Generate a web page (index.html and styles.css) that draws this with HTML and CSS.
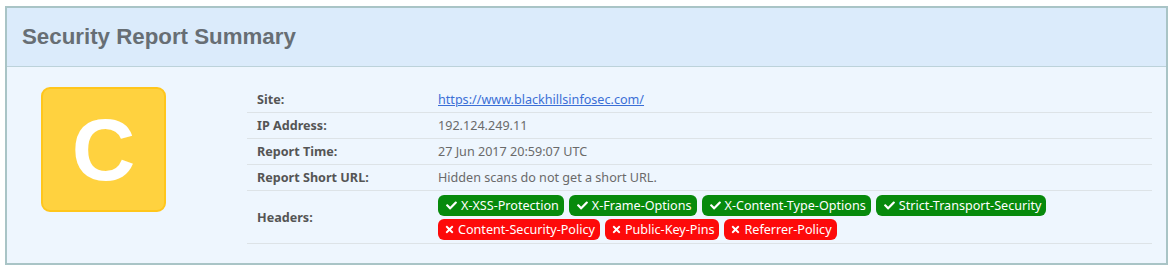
FILE: index.html
```html
<!DOCTYPE html>
<html lang="en">
<head>
    <meta charset="UTF-8">
    <title>Security Report Summary</title>
    <link rel="stylesheet" href="styles.css">
</head>
<body>

<div class="panel">
    <div class="panel-heading">
        <h3>Security Report Summary</h3>
    </div>
    <div class="panel-body">
        <div class="grade"><span>C</span></div>
        <table class="report">
            <tr>
                <th>Site:</th>
                <td><a href="#">https://www.blackhillsinfosec.com/</a></td>
            </tr>
            <tr>
                <th>IP Address:</th>
                <td>192.124.249.11</td>
            </tr>
            <tr>
                <th>Report Time:</th>
                <td>27 Jun 2017 20:59:07 UTC</td>
            </tr>
            <tr>
                <th>Report Short URL:</th>
                <td>Hidden scans do not get a short URL.</td>
            </tr>
            <tr class="headers-row">
                <th>Headers:</th>
                <td>
                    <div class="badges">
                        <div class="badge-line">
                            <span class="badge good"><svg viewBox="0 0 512 512"><path d="M173.9 439.4L7.5 273c-10-10-10-26.2 0-36.2l36.2-36.2c10-10 26.2-10 36.2 0L192 312.7 432.1 72.6c10-10 26.2-10 36.2 0l36.2 36.2c10 10 10 26.2 0 36.2L210.1 439.4c-10 10-26.2 10-36.2 0z"/></svg>X-XSS-Protection</span>
                            <span class="badge good"><svg viewBox="0 0 512 512"><path d="M173.9 439.4L7.5 273c-10-10-10-26.2 0-36.2l36.2-36.2c10-10 26.2-10 36.2 0L192 312.7 432.1 72.6c10-10 26.2-10 36.2 0l36.2 36.2c10 10 10 26.2 0 36.2L210.1 439.4c-10 10-26.2 10-36.2 0z"/></svg>X-Frame-Options</span>
                            <span class="badge good"><svg viewBox="0 0 512 512"><path d="M173.9 439.4L7.5 273c-10-10-10-26.2 0-36.2l36.2-36.2c10-10 26.2-10 36.2 0L192 312.7 432.1 72.6c10-10 26.2-10 36.2 0l36.2 36.2c10 10 10 26.2 0 36.2L210.1 439.4c-10 10-26.2 10-36.2 0z"/></svg>X-Content-Type-Options</span>
                            <span class="badge good"><svg viewBox="0 0 512 512"><path d="M173.9 439.4L7.5 273c-10-10-10-26.2 0-36.2l36.2-36.2c10-10 26.2-10 36.2 0L192 312.7 432.1 72.6c10-10 26.2-10 36.2 0l36.2 36.2c10 10 10 26.2 0 36.2L210.1 439.4c-10 10-26.2 10-36.2 0z"/></svg>Strict-Transport-Security</span>
                        </div>
                        <div class="badge-line">
                            <span class="badge bad"><svg viewBox="0 0 352 512"><path d="M242.7 256l100.1-100.1c12.3-12.3 12.3-32.2 0-44.5l-22.2-22.2c-12.3-12.3-32.2-12.3-44.5 0L176 189.3 75.9 89.2c-12.3-12.3-32.2-12.3-44.5 0L9.2 111.4c-12.3 12.3-12.3 32.2 0 44.5L109.3 256 9.2 356.1c-12.3 12.3-12.3 32.2 0 44.5l22.2 22.2c12.3 12.3 32.2 12.3 44.5 0L176 322.7l100.1 100.1c12.3 12.3 32.2 12.3 44.5 0l22.2-22.2c12.3-12.3 12.3-32.2 0-44.5L242.7 256z"/></svg>Content-Security-Policy</span>
                            <span class="badge bad"><svg viewBox="0 0 352 512"><path d="M242.7 256l100.1-100.1c12.3-12.3 12.3-32.2 0-44.5l-22.2-22.2c-12.3-12.3-32.2-12.3-44.5 0L176 189.3 75.9 89.2c-12.3-12.3-32.2-12.3-44.5 0L9.2 111.4c-12.3 12.3-12.3 32.2 0 44.5L109.3 256 9.2 356.1c-12.3 12.3-12.3 32.2 0 44.5l22.2 22.2c12.3 12.3 32.2 12.3 44.5 0L176 322.7l100.1 100.1c12.3 12.3 32.2 12.3 44.5 0l22.2-22.2c12.3-12.3 12.3-32.2 0-44.5L242.7 256z"/></svg>Public-Key-Pins</span>
                            <span class="badge bad"><svg viewBox="0 0 352 512"><path d="M242.7 256l100.1-100.1c12.3-12.3 12.3-32.2 0-44.5l-22.2-22.2c-12.3-12.3-32.2-12.3-44.5 0L176 189.3 75.9 89.2c-12.3-12.3-32.2-12.3-44.5 0L9.2 111.4c-12.3 12.3-12.3 32.2 0 44.5L109.3 256 9.2 356.1c-12.3 12.3-12.3 32.2 0 44.5l22.2 22.2c12.3 12.3 32.2 12.3 44.5 0L176 322.7l100.1 100.1c12.3 12.3 32.2 12.3 44.5 0l22.2-22.2c12.3-12.3 12.3-32.2 0-44.5L242.7 256z"/></svg>Referrer-Policy</span>
                        </div>
                    </div>
                </td>
            </tr>
        </table>
    </div>
</div>

</body>
</html>
```

FILE: styles.css
```css
body {
    margin: 0;
    padding: 6px 8px 0 5px;
    background-color: #ffffff;
    font-family: "Noto Sans", sans-serif;
}
.panel {
    width: 1159px;
    border: 2px solid #a9c4c6;
    background-color: #eef6fe;
}
.panel-heading {
    height: 58px;
    background-color: #dbebfb;
    border-bottom: 1px solid #bcd2da;
    display: flex;
    align-items: center;
    padding-left: 15px;
}
.panel-heading h3 {
    margin: 0;
    font-family: "Liberation Sans", Arial, sans-serif;
    font-size: 22.3px;
    font-weight: bold;
    color: #676e74;
}
.panel-body {
    display: flex;
    align-items: flex-start;
    padding: 20px 14px 19px 34px;
}
.grade {
    width: 121px;
    height: 121px;
    border: 2px solid #ffc61c;
    border-radius: 9px;
    background-color: #ffd23f;
    display: flex;
    align-items: center;
    justify-content: center;
    flex-shrink: 0;
}
.grade span {
    font-family: "Liberation Sans", Arial, sans-serif;
    font-weight: bold;
    font-size: 88px;
    color: #ffffff;
    line-height: 1;
}
.report {
    margin-left: 81px;
    flex: 1;
    border-collapse: collapse;
    font-size: 12.6px;
}
.report th,
.report td {
    text-align: left;
    padding: 3px 10px;
    line-height: 19px;
    border-bottom: 1px solid #dde3e7;
}
.report th {
    width: 161px;
    font-weight: bold;
    color: #555555;
}
.report td {
    color: #6a6a6a;
}
.report a {
    color: #3b6fd6;
}
.headers-row th,
.headers-row td {
    padding-top: 4px;
    padding-bottom: 3px;
}
.badges {
    display: flex;
    flex-direction: column;
    gap: 3px;
}
.badge-line {
    display: flex;
    gap: 5px;
}
.badge {
    display: inline-flex;
    align-items: center;
    height: 21px;
    padding: 0 5px 0 8px;
    border-radius: 6px;
    color: #ffffff;
    font-size: 12.6px;
    box-sizing: border-box;
}
.badge svg {
    height: 11px;
    fill: #ffffff;
    margin-right: 4px;
}
.good svg {
    width: 11px;
}
.bad {
    padding-left: 7px;
}
.bad svg {
    width: 9px;
}
.good {
    background-color: #078a0c;
}
.bad {
    background-color: #fd0a0a;
}
```
